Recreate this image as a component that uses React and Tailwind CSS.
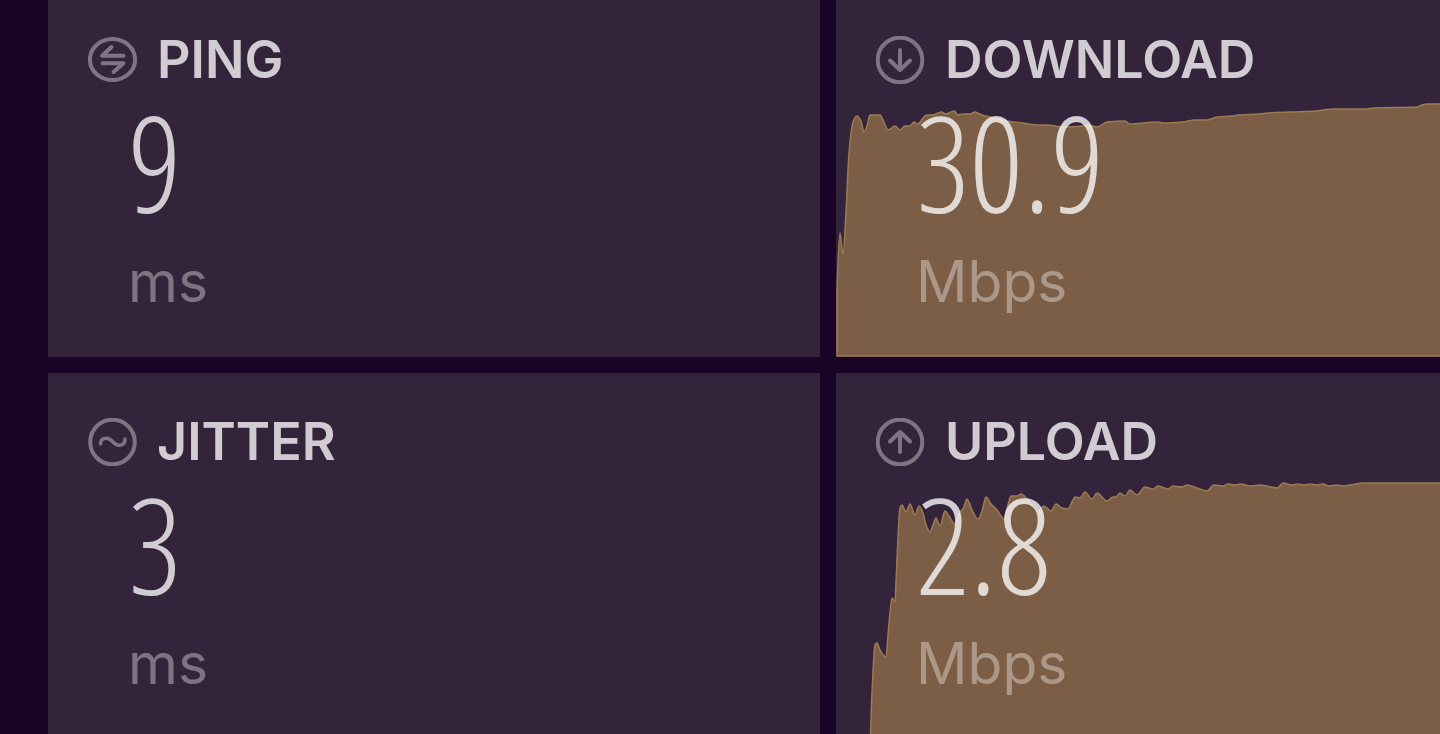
const downloadPoints = [
  [1, 356], [1, 290], [4, 233], [7, 254], [10, 212], [13, 153], [17, 122], [21, 116], [25, 121], [28, 132], [31, 126],
  [34, 115], [44, 115], [47, 120], [52, 130], [59, 126], [64, 130], [69, 126], [74, 126], [78, 122], [82, 124],
  [87, 118], [91, 115], [97, 115], [105, 112], [110, 114], [118, 111], [122, 115], [127, 114], [134, 114],
  [139, 112], [146, 115], [154, 117], [171, 121], [186, 123], [201, 125], [211, 125], [227, 127], [247, 126],
  [252, 125], [261, 127], [271, 122], [289, 121], [294, 124], [321, 122], [327, 123], [347, 122], [359, 120],
  [371, 120], [381, 117], [397, 116], [402, 115], [424, 114], [431, 113], [454, 112], [481, 111], [487, 110],
  [497, 109], [531, 109], [537, 108], [581, 107], [586, 105], [591, 104], [606, 104],
]

const uploadPoints = [
  [34, 366], [36, 320], [39, 272], [41, 270], [44, 277], [50, 284], [52, 262], [54, 240], [56, 225], [59, 229],
  [60, 210], [62, 165], [64, 135], [66, 132], [70, 139], [74, 131], [79, 142], [83, 133], [87, 140], [90, 152],
  [94, 159], [97, 152], [100, 145], [104, 153], [109, 138], [113, 143], [119, 151], [124, 139], [127, 136],
  [131, 126], [136, 137], [142, 146], [146, 138], [150, 124], [155, 131], [161, 137], [168, 146], [171, 136],
  [175, 123], [181, 123], [185, 121], [191, 126], [197, 134], [202, 138], [208, 133], [215, 138], [220, 131],
  [226, 135], [232, 136], [236, 129], [239, 124], [244, 125], [249, 119], [256, 126], [261, 120], [271, 128],
  [277, 124], [280, 124], [284, 120], [289, 123], [294, 117], [301, 122], [309, 114], [317, 116], [322, 113],
  [332, 116], [337, 113], [346, 114], [351, 112], [361, 115], [371, 118], [378, 112], [387, 113], [392, 111],
  [399, 112], [405, 111], [414, 113], [424, 112], [441, 115], [447, 110], [456, 112], [462, 111], [468, 112],
  [474, 111], [481, 112], [487, 111], [493, 113], [501, 112], [507, 113], [514, 112], [527, 110], [606, 110],
]

// slope at a sample: flat on peaks and valleys, averaged on the way up or down
function slopeAt(points, i) {
  const prev = points[i - 1]
  const next = points[i + 1]
  if (!prev || !next) return 0
  const [x, y] = points[i]
  const a = (y - prev[1]) / (x - prev[0] || 1)
  const b = (next[1] - y) / (next[0] - x || 1)
  return a * b <= 0 ? 0 : (2 * a * b) / (a + b)
}

function curve(points) {
  return points.slice(1).reduce((d, [x, y], i) => {
    const [px, py] = points[i]
    const third = (x - px) / 3
    const y1 = py + slopeAt(points, i) * third
    const y2 = y - slopeAt(points, i + 1) * third
    return `${d} C${px + third} ${y1} ${x - third} ${y2} ${x} ${y}`
  }, `M${points[0][0]} ${points[0][1]}`)
}

function SpeedChart({ points, height, baseline }) {
  return (
    <svg
      className="absolute inset-0 w-full h-full"
      viewBox={`0 0 604 ${height}`}
      preserveAspectRatio="none"
      aria-hidden="true"
    >
      <path
        d={`${curve(points)} V${baseline} H${points[0][0]} Z`}
        fill="#7c5e46"
        stroke="#9c7b53"
        strokeWidth="1.5"
        vectorEffect="non-scaling-stroke"
      />
    </svg>
  )
}

const icons = {
  ping: (
    <>
      <ellipse cx="24.5" cy="23.5" rx="22.6" ry="20.6" />
      <path d="M23.5 11 L14 19.7 H35.5 M14.5 27.3 H35.5 L25.5 36" />
    </>
  ),
  jitter: (
    <>
      <circle cx="24.5" cy="24" r="22.3" />
      <path d="M12.5 26 C12.5 22 15 20.2 18.5 20.2 C24.5 20.2 25 27.3 31 27.3 C35 27.3 37 25 37 21" strokeWidth="3.5" />
    </>
  ),
  download: (
    <>
      <circle cx="24" cy="24" r="22.3" />
      <path d="M24 14 V34 M14 24.5 L24 34 L34 24.5" />
    </>
  ),
  upload: (
    <>
      <circle cx="24" cy="24" r="22.3" />
      <path d="M24 34 V14 M14 23.5 L24 14 L34 23.5" />
    </>
  ),
}

function MetricIcon({ name }) {
  return (
    <svg
      className="w-[49px] h-12 shrink-0"
      viewBox="0 0 49 48"
      fill="none"
      stroke="#ffffff"
      strokeOpacity="0.37"
      strokeWidth="4"
      strokeLinecap="round"
      strokeLinejoin="round"
      aria-hidden="true"
    >
      {icons[name]}
    </svg>
  )
}

function Metric({ icon, title, value, unit, className, children }) {
  return (
    <section className={`relative overflow-hidden bg-[#34243b] ${className}`}>
      {children}
      <div className="relative px-10 pb-4">
        <div className="flex items-center gap-5">
          <MetricIcon name={icon} />
          <h2 className="font-[Inter,sans-serif] font-semibold text-[52px] leading-[48px] text-white/77">{title}</h2>
        </div>
        <div className="pl-10">
          <p className="font-['Open_Sans_Condensed_Light','Open_Sans_Condensed',sans-serif] font-light text-[134px] leading-[154px] text-white/77">
            {value}
          </p>
          <p className="font-[Inter,sans-serif] text-[57px] leading-[88px] text-white/36">{unit}</p>
        </div>
      </div>
    </section>
  )
}

export default function App() {
  return (
    <main className="min-h-screen bg-[#1a0426] pl-12 grid grid-cols-[772fr_604fr] grid-rows-[357px_1fr] gap-4">
      <Metric icon="ping" title="PING" value="9" unit="ms" className="pt-9" />
      <Metric icon="download" title="DOWNLOAD" value="30.9" unit="Mbps" className="pt-9">
        <SpeedChart points={downloadPoints} height={357} baseline={356} />
      </Metric>
      <Metric icon="jitter" title="JITTER" value="3" unit="ms" className="pt-[45px]" />
      <Metric icon="upload" title="UPLOAD" value="2.8" unit="Mbps" className="pt-[45px]">
        <SpeedChart points={uploadPoints} height={361} baseline={366} />
      </Metric>
    </main>
  )
}
